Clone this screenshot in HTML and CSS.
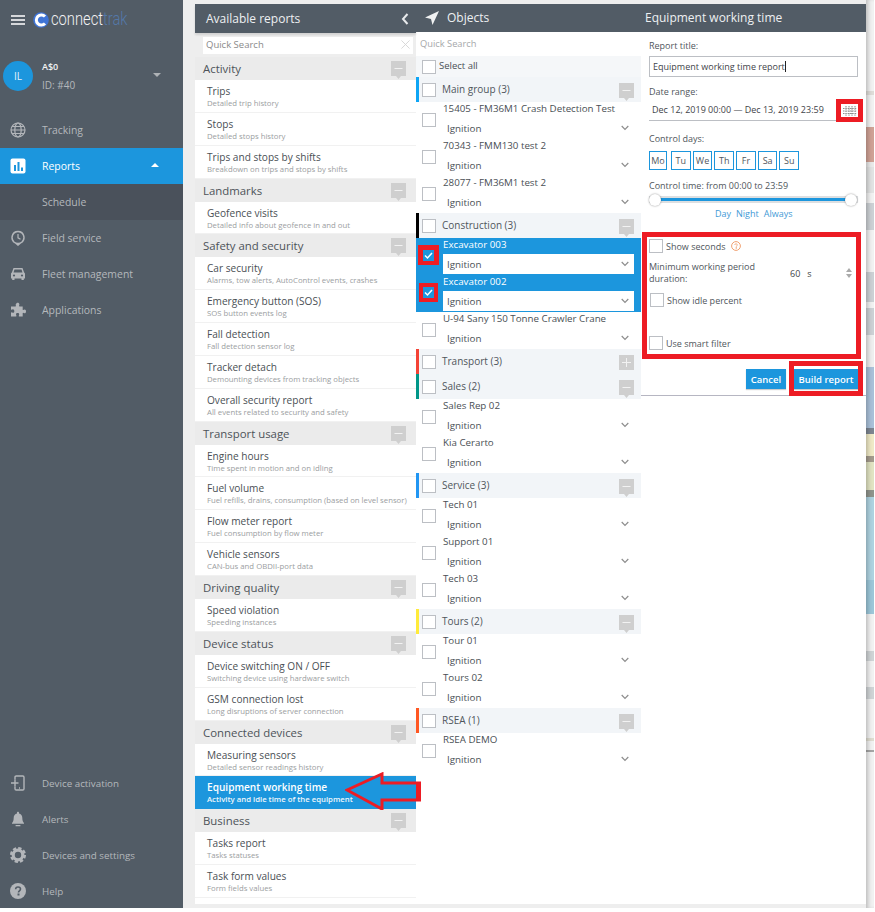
FILE: index.html
```html
<!DOCTYPE html>
<html lang="en">
<head>
<meta charset="utf-8">
<title>Equipment working time</title>
<link rel="stylesheet" href="styles.css">
</head>
<body>
<svg class="defs" width="0" height="0" aria-hidden="true">
  <symbol id="minus" viewBox="0 0 15 18">
    <path d="M0 0h15v15h-5l-2.500 3-2.500-3H0z" fill="#cfcfcf"/>
    <rect x="3.500" y="7" width="8" height="1" fill="#f2f2f2"/>
  </symbol>
  <symbol id="plus" viewBox="0 0 15 15">
    <rect width="15" height="15" fill="#cfcfcf"/>
    <path d="M7 3h1v4h4v1H8v4H7V8H3V7h4z" fill="#f2f2f2"/>
  </symbol>
  <symbol id="chev" viewBox="0 0 8 6">
    <path d="M.7 1l3.300 3.300L7.300 1" fill="none" stroke="#8d8d8d" stroke-width="1.200"/>
  </symbol>
</svg>
<div class="app">
  <aside class="sidebar">
    <div class="brand">
      <span class="burger"><i></i><i></i><i></i></span>
      <svg class="logo-mark" viewBox="0 0 16 16" width="16" height="16"><circle cx="8" cy="8" r="7.800" fill="#3f74d6"/><path d="M12 4.600A5 5 0 1 0 12 11.400" fill="none" stroke="#fff" stroke-width="3"/></svg>
      <span class="logo-text">connect<em>trak</em></span>
    </div>
    <div class="account">
      <span class="avatar">IL</span>
      <span class="acc-info"><b>A$0</b><small>ID: #40</small></span>
      <span class="caret-down"></span>
    </div>
    <nav class="nav">
      <a class="nav-item"><svg class="ico" viewBox="0 0 16 16"><g fill="none" stroke="#b3b6ba" stroke-width="1.200"><circle cx="8" cy="8" r="7"/><ellipse cx="8" cy="8" rx="3.200" ry="7"/><path d="M1 8h14M2 4.500h12M2 11.500h12"/></g></svg><span>Tracking</span></a>
      <a class="nav-item active"><svg class="ico" viewBox="0 0 16 16"><rect width="15" height="15" x=".5" y=".5" rx="2" fill="#fff"/><path d="M4 7h2v6H4zM7.500 4h2v9h-2zM11 9.500h2V13h-2z" fill="#1c96dd"/></svg><span>Reports</span><i class="caret-up"></i></a>
      <a class="nav-item sub"><span>Schedule</span></a>
      <a class="nav-item"><svg class="ico" viewBox="0 0 16 16"><path d="M8 .8a6.700 6.700 0 0 1 3 12.700L8 16l-3-2.500A6.700 6.700 0 0 1 8 .8z" fill="#b3b6ba"/><circle cx="8" cy="7.500" r="5.200" fill="#525c66"/><path d="M8 4v3.800l2.500 1.400" fill="none" stroke="#b3b6ba" stroke-width="1.200"/></svg><span>Field service</span></a>
      <a class="nav-item"><svg class="ico" viewBox="0 0 16 16"><path d="M3.500 2h9l1.600 4.500c.6.300.9.800.9 1.500v4.500h-1.200V14h-2.300v-1.500H4.500V14H2.200v-1.500H1V8c0-.7.3-1.200.9-1.500z" fill="#b3b6ba"/><path d="M4.500 3.500h7l1 3h-9z" fill="#525c66"/><circle cx="4" cy="9.500" r="1.100" fill="#525c66"/><circle cx="12" cy="9.500" r="1.100" fill="#525c66"/></svg><span>Fleet management</span></a>
      <a class="nav-item"><svg class="ico" viewBox="0 0 16 16"><path d="M6 2.400C6 1.400 6.800.8 7.700.8s1.700.6 1.700 1.600c0 .7-.4 1-.4 1.500 0 .3.300.5.700.5h3v3.100c0 .4.200.6.500.6.500 0 .8-.5 1.400-.5.900 0 1.400.8 1.400 1.800s-.5 1.800-1.400 1.800c-.6 0-.9-.5-1.400-.5-.3 0-.5.200-.5.600v3.100H9.300c-.4 0-.6-.2-.6-.5 0-.5.500-.8.500-1.400 0-.9-.7-1.400-1.600-1.400s-1.600.5-1.600 1.400c0 .6.500.9.500 1.400 0 .3-.2.500-.6.500H1v-3.500c0-.4.200-.6.500-.6.500 0 .8.500 1.400.5.900 0 1.400-.7 1.400-1.600S3.800 7.300 2.900 7.300c-.6 0-.9.500-1.400.5-.3 0-.5-.2-.5-.6V4.400h4.300c.4 0 .7-.2.700-.5 0-.5-.5-.8-.5-1.500z" fill="#b3b6ba"/></svg><span>Applications</span></a>
    </nav>
    <nav class="nav nav-bottom">
      <a class="nav-item"><svg class="ico" viewBox="0 0 16 16"><g fill="none" stroke="#b3b6ba" stroke-width="1.400"><path d="M5 4.500V2.200C5 1.500 5.500 1 6.200 1h6.600c.7 0 1.200.5 1.200 1.200v11.600c0 .7-.5 1.200-1.200 1.200H6.200C5.500 15 5 14.500 5 13.800v-2.300"/><path d="M1 8h7.500M5 4.500V11.500M9 13h1" /></g></svg><span>Device activation</span></a>
      <a class="nav-item"><svg class="ico" viewBox="0 0 16 16"><path d="M8 .8c.6 0 1 .4 1 1v.6c2 .5 3.300 2.100 3.300 4.300 0 3.200.9 4.300 1.700 5.300v.7H2v-.7c.8-1 1.700-2.100 1.700-5.300 0-2.200 1.300-3.800 3.300-4.300v-.6c0-.6.400-1 1-1z" fill="#b3b6ba"/><rect x="5.500" y="14" width="5" height="1.300" rx=".6" fill="#b3b6ba"/></svg><span>Alerts</span></a>
      <a class="nav-item"><svg class="ico" viewBox="0 0 16 16"><circle cx="8" cy="8" r="4.800" fill="none" stroke="#b3b6ba" stroke-width="3.200"/><circle cx="8" cy="8" r="6.800" fill="none" stroke="#b3b6ba" stroke-width="2.400" stroke-dasharray="3.300 2.040"/></svg><span>Devices and settings</span></a>
      <a class="nav-item"><svg class="ico" viewBox="0 0 16 16"><circle cx="8" cy="8" r="8" fill="#b3b6ba"/><path d="M5.600 6.200C5.700 4.700 6.700 4 8 4c1.400 0 2.500.8 2.500 2.100 0 1.800-2 1.800-2 3.300" fill="none" stroke="#525c66" stroke-width="1.600"/><rect x="7.500" y="10.500" width="2" height="2" fill="#525c66"/></svg><span>Help</span></a>
    </nav>
  </aside>

  <main class="main">
    <div class="panels">
      <section class="reports">
        <header class="head head-reports"><h2>Available reports</h2><svg class="back" viewBox="0 0 8 12" width="8" height="12"><path d="M6.500 1L2 6l4.500 5" fill="none" stroke="#e8eaec" stroke-width="2"/></svg></header>
        <div class="rsearch"><div class="rsearch-box"><span>Quick Search</span><svg viewBox="0 0 10 10" width="9" height="9"><path d="M.5.500l9 9M9.500.5l-9 9" stroke="#d5d5d5" stroke-width="1"/></svg></div></div>

        <div class="rgroup"><span>Activity</span><svg class="gico"><use href="#minus"/></svg></div>
        <a class="ritem"><b>Trips</b><small>Detailed trip history</small></a>
        <a class="ritem"><b>Stops</b><small>Detailed stops history</small></a>
        <a class="ritem"><b>Trips and stops by shifts</b><small>Breakdown on trips and stops by shifts</small></a>
        <div class="rgroup"><span>Landmarks</span><svg class="gico"><use href="#minus"/></svg></div>
        <a class="ritem"><b>Geofence visits</b><small>Detailed info about geofence in and out</small></a>
        <div class="rgroup"><span>Safety and security</span><svg class="gico"><use href="#minus"/></svg></div>
        <a class="ritem"><b>Car security</b><small>Alarms, tow alerts, AutoControl events, crashes</small></a>
        <a class="ritem"><b>Emergency button (SOS)</b><small>SOS button events log</small></a>
        <a class="ritem"><b>Fall detection</b><small>Fall detection sensor log</small></a>
        <a class="ritem"><b>Tracker detach</b><small>Demounting devices from tracking objects</small></a>
        <a class="ritem"><b>Overall security report</b><small>All events related to security and safety</small></a>
        <div class="rgroup"><span>Transport usage</span><svg class="gico"><use href="#minus"/></svg></div>
        <a class="ritem"><b>Engine hours</b><small>Time spent in motion and on idling</small></a>
        <a class="ritem"><b>Fuel volume</b><small>Fuel refills, drains, consumption (based on level sensor)</small></a>
        <a class="ritem"><b>Flow meter report</b><small>Fuel consumption by flow meter</small></a>
        <a class="ritem"><b>Vehicle sensors</b><small>CAN-bus and OBDII-port data</small></a>
        <div class="rgroup"><span>Driving quality</span><svg class="gico"><use href="#minus"/></svg></div>
        <a class="ritem"><b>Speed violation</b><small>Speeding instances</small></a>
        <div class="rgroup"><span>Device status</span><svg class="gico"><use href="#minus"/></svg></div>
        <a class="ritem"><b>Device switching ON / OFF</b><small>Switching device using hardware switch</small></a>
        <a class="ritem"><b>GSM connection lost</b><small>Long disruptions of server connection</small></a>
        <div class="rgroup"><span>Connected devices</span><svg class="gico"><use href="#minus"/></svg></div>
        <a class="ritem"><b>Measuring sensors</b><small>Detailed sensor readings history</small></a>
        <a class="ritem selected"><b>Equipment working time</b><small>Activity and idle time of the equipment</small></a>
        <div class="rgroup"><span>Business</span><svg class="gico"><use href="#minus"/></svg></div>
        <a class="ritem"><b>Tasks report</b><small>Tasks statuses</small></a>
        <a class="ritem"><b>Task form values</b><small>Form fields values</small></a>
      </section>

      <section class="objects">
        <header class="head head-objects"><svg viewBox="0 0 14 14" width="14" height="14"><path d="M14 0L0 6.500l6 1.500L7.500 14z" fill="#f0f1f2"/></svg><h2>Objects</h2></header>
        <div class="osearch">Quick Search</div>
        <div class="selectall"><i class="cb"></i><span>Select all</span></div>

        <div class="ogroup g-blue"><i class="cb"></i><span>Main group (3)</span><svg class="gico"><use href="#minus"/></svg></div>
        <div class="orow"><i class="cb"></i><div class="orow-body"><p>15405 - FM36M1 Crash Detection Test</p><div class="sel"><span>Ignition</span><svg class="chev"><use href="#chev"/></svg></div></div></div>
        <div class="orow"><i class="cb"></i><div class="orow-body"><p>70343 - FMM130 test 2</p><div class="sel"><span>Ignition</span><svg class="chev"><use href="#chev"/></svg></div></div></div>
        <div class="orow"><i class="cb"></i><div class="orow-body"><p>28077 - FM36M1 test 2</p><div class="sel"><span>Ignition</span><svg class="chev"><use href="#chev"/></svg></div></div></div>

        <div class="ogroup g-black"><i class="cb"></i><span>Construction (3)</span><svg class="gico"><use href="#minus"/></svg></div>
        <div class="orow on"><i class="cb"><svg viewBox="0 0 11 11" width="11" height="11"><path d="M2 5.500l2.500 2.500L9 3" fill="none" stroke="#fff" stroke-width="1.500"/></svg></i><div class="orow-body"><p>Excavator 003</p><div class="sel"><span>Ignition</span><svg class="chev"><use href="#chev"/></svg></div></div></div>
        <div class="orow on"><i class="cb"><svg viewBox="0 0 11 11" width="11" height="11"><path d="M2 5.500l2.500 2.500L9 3" fill="none" stroke="#fff" stroke-width="1.500"/></svg></i><div class="orow-body"><p>Excavator 002</p><div class="sel"><span>Ignition</span><svg class="chev"><use href="#chev"/></svg></div></div></div>
        <div class="orow"><i class="cb"></i><div class="orow-body"><p>U-94 Sany 150 Tonne Crawler Crane</p><div class="sel"><span>Ignition</span><svg class="chev"><use href="#chev"/></svg></div></div></div>

        <div class="ogroup g-red"><i class="cb"></i><span>Transport (3)</span><svg class="gico gico-plus"><use href="#plus"/></svg></div>
        <div class="ogroup g-teal"><i class="cb"></i><span>Sales (2)</span><svg class="gico"><use href="#minus"/></svg></div>
        <div class="orow"><i class="cb"></i><div class="orow-body"><p>Sales Rep 02</p><div class="sel"><span>Ignition</span><svg class="chev"><use href="#chev"/></svg></div></div></div>
        <div class="orow"><i class="cb"></i><div class="orow-body"><p>Kia Cerarto</p><div class="sel"><span>Ignition</span><svg class="chev"><use href="#chev"/></svg></div></div></div>

        <div class="ogroup g-blue2"><i class="cb"></i><span>Service (3)</span><svg class="gico"><use href="#minus"/></svg></div>
        <div class="orow"><i class="cb"></i><div class="orow-body"><p>Tech 01</p><div class="sel"><span>Ignition</span><svg class="chev"><use href="#chev"/></svg></div></div></div>
        <div class="orow"><i class="cb"></i><div class="orow-body"><p>Support 01</p><div class="sel"><span>Ignition</span><svg class="chev"><use href="#chev"/></svg></div></div></div>
        <div class="orow"><i class="cb"></i><div class="orow-body"><p>Tech 03</p><div class="sel"><span>Ignition</span><svg class="chev"><use href="#chev"/></svg></div></div></div>

        <div class="ogroup g-yellow"><i class="cb"></i><span>Tours (2)</span><svg class="gico"><use href="#minus"/></svg></div>
        <div class="orow"><i class="cb"></i><div class="orow-body"><p>Tour 01</p><div class="sel"><span>Ignition</span><svg class="chev"><use href="#chev"/></svg></div></div></div>
        <div class="orow"><i class="cb"></i><div class="orow-body"><p>Tours 02</p><div class="sel"><span>Ignition</span><svg class="chev"><use href="#chev"/></svg></div></div></div>

        <div class="ogroup g-orange"><i class="cb"></i><span>RSEA (1)</span><svg class="gico"><use href="#minus"/></svg></div>
        <div class="orow"><i class="cb"></i><div class="orow-body"><p>RSEA DEMO</p><div class="sel"><span>Ignition</span><svg class="chev"><use href="#chev"/></svg></div></div></div>
      </section>

      <section class="form">
        <header class="head head-form"><h2>Equipment working time</h2></header>
        <div class="form-body">
          <label class="lbl lbl-first">Report title:</label>
          <div class="title-input"><span>Equipment working time report</span><i class="cursor"></i></div>
          <label class="lbl lbl-date">Date range:</label>
          <div class="date-row"><span>Dec 12, 2019 00:00 — Dec 13, 2019 23:59</span></div>
          <label class="lbl lbl-days">Control days:</label>
          <div class="days"><span class="d d-mo">Mo</span><span class="d">Tu</span><span class="d">We</span><span class="d">Th</span><span class="d">Fr</span><span class="d">Sa</span><span class="d">Su</span></div>
          <label class="lbl lbl-time">Control time: from 00:00 to 23:59</label>
          <div class="slider"><div class="track"><div class="fill"></div></div><i class="knob"></i><i class="knob knob-r"></i></div>
          <div class="links"><a>Day</a><a>Night</a><a>Always</a></div>
          <div class="check-row row-seconds"><i class="cb"></i><span>Show seconds</span><svg class="qm" viewBox="0 0 10 10" width="10" height="10"><circle cx="5" cy="5" r="4.400" fill="none" stroke="#f0a070" stroke-width="1"/><path d="M3.600 4C3.700 3.200 4.300 2.800 5 2.800c.8 0 1.400.5 1.400 1.100 0 .9-1.200 1-1.200 1.900M4.900 6.600h.6v.7h-.6z" fill="none" stroke="#f0a070" stroke-width=".8"/></svg></div>
          <div class="min-row"><span class="min-lbl">Minimum working period duration:</span><span class="min-val">60</span><span class="min-unit">s</span><span class="spin"><i class="sp-up"></i><i class="sp-down"></i></span></div>
          <div class="check-row row-idle"><i class="cb"></i><span>Show idle percent</span></div>
          <div class="check-row row-smart"><i class="cb"></i><span>Use smart filter</span></div>
          <div class="actions"><button class="btn">Cancel</button><button class="btn btn-build">Build report</button></div>
        </div>
      </section>
    </div>
    <div class="map"></div>
  </main>

  <!-- red annotations laid over the page -->
  <div class="mark mark-cal"><svg viewBox="0 0 14 10" width="14" height="10"><path d="M0 2.500h14M0 5h14M0 7.500h14M3 0v10M6 0v10M9 0v10M12 0v10" stroke="#8e8e8e" stroke-width="1.100" stroke-dasharray="1.500 .8"/></svg></div>
  <div class="mark mark-opts"></div>
  <div class="mark mark-build"></div>
  <div class="mark mark-cb1"></div>
  <div class="mark mark-cb2"></div>
  <svg class="arrow" viewBox="0 0 76 38" width="76" height="38"><path d="M2 18L37 2v9h38v17H37v9z" fill="none" stroke="#ed1c24" stroke-width="3"/><path d="M71 10h4v19h-4z" fill="#ed1c24"/></svg>
</div>
</body>
</html>
```

FILE: styles.css
```css
* { box-sizing: border-box; }
html, body { margin: 0; padding: 0; background: #fff; }
body { font-family: "Open Sans", "Liberation Sans", sans-serif; color: #4a4f55; }
.defs { position: absolute; }
h2, p { margin: 0; font-weight: 400; }
a { display: block; }

.app { position: relative; display: flex; width: 874px; height: 908px; overflow: hidden; }

/* sidebar */
.sidebar { width: 183px; flex: none; background: #525c66; display: flex; flex-direction: column; color: #b4b8bc; }
.brand { height: 32px; padding: 10px 0 0 11px; display: flex; align-items: flex-start; }
.burger { width: 14px; margin-top: 5px; display: flex; flex-direction: column; gap: 2px; }
.burger i { display: block; height: 2px; background: #d5d7da; }
.logo-mark { margin: 2px 0 0 8px; flex: none; }
.logo-text { margin: -3px 0 0 2px; font-family: Roboto, sans-serif; font-weight: 300; font-size: 19px; line-height: 24px; color: #f2f3f5; transform: scaleX(.775); transform-origin: left center; white-space: nowrap; }
.logo-text em { font-style: normal; color: #5478a8; }
.account { height: 80px; padding: 29px 0 0 3px; display: flex; align-items: flex-start; }
.avatar { width: 30px; height: 30px; border-radius: 50%; background: #1c96dd; color: #e8f4fb; font-size: 10px; line-height: 30px; text-align: center; flex: none; }
.acc-info { margin-left: 9px; display: flex; flex-direction: column; }
.acc-info b { font-size: 9px; line-height: 12px; font-weight: 600; color: #f2f3f4; }
.acc-info small { font-size: 10px; line-height: 12px; margin-top: 6px; color: #b4b8bc; }
.caret-down { margin: 12px 0 0 auto; margin-right: 22px; width: 0; height: 0; border: 4.500px solid transparent; border-top: 4.500px solid #aeb2b6; border-bottom: 0; }
.nav-item { height: 36px; display: flex; align-items: center; padding-left: 10px; font-size: 10.450px; color: #b4b8bc; position: relative; }
.nav-item .ico { width: 16px; height: 16px; flex: none; margin-right: 16px; }
.nav-item.active { background: #1c96dd; color: #fff; }
.nav-item.sub { background: #4a515b; padding-left: 42px; }
.caret-up { position: absolute; left: 151px; top: 15px; width: 0; height: 0; border: 4.500px solid transparent; border-bottom: 4.500px solid #fff; border-top: 0; }
.nav-bottom { margin-top: auto; margin-bottom: -1px; }
.nav-bottom .nav-item { font-size: 9.800px; }

/* main */
.main { flex: 1; display: flex; background: #eee; padding-left: 12px; }
.panels { width: 671px; margin: 4px 0; display: flex; height: 900px; background: #fff; }
.map { flex: 1; box-shadow: inset 4px 0 4px -2px rgba(0,0,0,.22);
  background: linear-gradient(to bottom,
    #f1f1f1 0 91px, #dedcd8 91px 95px, #f1f1f1 95px 127px, #cfa195 127px 162px, #e9e9e9 162px 167px,
    #e1e2e2 167px 193px, #f1f1f1 193px 203px, #ccd0d4 203px 230px, #f1f1f1 230px 272px,
    #ccd0d4 272px 302px, #f1f1f1 302px 308px, #ccd0d4 308px 335px, #eee 335px 367px,
    #a9c0d8 367px 428px, #7d8590 428px 434px, #efe9c6 434px 456px, #a39a8c 456px 462px,
    #e1e3c2 462px 490px, #8f948c 490px 497px, #aed2e0 497px 580px, #9cc6d8 580px 614px,
    #f1f1f1 614px 651px, #cfd3d5 651px 661px, #f1f1f1 661px 687px, #cfd3d5 687px 699px,
    #f1f1f1 699px 738px, #dedcd0 738px 741px, #f1f1f1 741px 750px, #a5a5a5 750px 752px, #f1f1f1 752px 908px);
}

.head { background: #525c66; color: #eef0f2; display: flex; align-items: center; height: 28px; position: relative; z-index: 1; }
.head h2 { font-size: 12px; line-height: 16px; }
.head-reports { height: 29px; padding-left: 11px; box-shadow: 0 2px 2px rgba(0,0,0,.12); }
.back { margin-left: auto; margin-right: 7px; }
.head-objects { padding-left: 9px; }
.head-objects h2 { margin-left: 8px; }
.head-form { padding-left: 4px; }

/* reports */
.reports { width: 221px; flex: none; background: #fff; }
.rsearch { height: 24px; background: #eee; padding: 4px 3px 0 8px; }
.rsearch-box { height: 17px; background: #fff; display: flex; align-items: center; justify-content: space-between; padding: 0 3px 2px; font-size: 9.500px; color: #8a8a8a; }
.rgroup { height: 23px; background: #ebebeb; display: flex; align-items: center; justify-content: space-between; padding: 0 10px 0 8px; font-size: 11.400px; color: #4d5359; }
.gico { width: 15px; height: 18px; flex: none; }
.rgroup .gico { margin-top: 3px; }
.ritem { height: 32.850px; padding: 4px 12px 0; border-bottom: 1px solid #f1f1f1; overflow: hidden; white-space: nowrap; }
.ritem b { display: block; font-weight: 400; font-size: 10.100px; line-height: 14px; color: #4a4f55; }
.ritem small { display: block; font-size: 7.750px; line-height: 11px; color: #9b9ea1; margin-top: 0; }
.ritem.selected { background: #1c96dd; border-bottom: 0; }
.ritem.selected b { color: #fff; font-weight: 600; }
.ritem.selected small { color: #eef6fc; font-weight: 600; }

/* objects */
.objects { width: 225px; flex: none; background: #fff; }
.osearch { height: 24px; padding-left: 4px; font-size: 9.300px; line-height: 24px; color: #a6a8aa; }
.selectall { height: 21px; background: #f5f7f9; display: flex; align-items: center; padding: 0 0 0 6px; font-size: 9.500px; color: #4a4f55; }
.selectall span { margin-top: -2px; }
.cb { display: block; flex: none; width: 14px; height: 14px; border: 1px solid #bcbfc4; background: #fff; }
.selectall .cb { margin-right: 3px; }
.ogroup { height: 25px; background: #f2f5f8; display: flex; align-items: center; padding: 0 7px 0 3px; border-left: 3px solid transparent; font-size: 10px; color: #50565c; }
.ogroup span { margin: -2px 0 0 6px; flex: 1; }
.ogroup .gico { margin-top: 5px; }
.ogroup .gico-plus { height: 15px; margin-top: 2px; }
.g-blue { border-left-color: #0ea5f5; }
.g-black { border-left-color: #000; }
.g-red { border-left-color: #f44336; }
.g-teal { border-left-color: #009688; }
.g-blue2 { border-left-color: #2196f3; }
.g-yellow { border-left-color: #ffeb3b; }
.g-orange { border-left-color: #ff5722; }
.orow { height: 37px; display: flex; padding-left: 6px; position: relative; }
.orow > .cb { margin-top: 11px; }
.orow-body { margin-left: 7px; width: 191px; }
.orow-body p { font-size: 9.750px; line-height: 13px; margin-top: 0; color: #4a4f55; white-space: nowrap; }
.sel { margin-top: 3px; height: 20px; display: flex; align-items: center; justify-content: space-between; padding: 0 5px 0 4px; font-size: 9.800px; color: #4a4f55; background: #fff; }
.chev { width: 8px; height: 6px; }
.orow.on { background: #1c96dd; }
.orow.on p { color: #fff; }
.orow.on > .cb { background: #1c96dd; border: 0; width: 11px; height: 11px; margin: 12px 3px 0 1px; position: relative; z-index: 3; }
.orow.on > .cb svg { display: block; }
.orow.on .orow-body { margin-left: 6px; }

/* form */
.form { width: 225px; flex: none; background: #fff; }
.form-body { padding: 0 8px 0 8px; height: 364px; border-bottom: 1px solid #b6b6c2; font-size: 9px; color: #50565c; }
.lbl { display: block; font-size: 9px; line-height: 14px; color: #50565c; }
.lbl-first { padding-top: 7px; height: 20px; }
.title-input { margin-top: 4px; width: 209px; height: 21px; border: 1px solid #bcbfc4; display: flex; align-items: center; padding-left: 3px; font-size: 9px; color: #3f4449; }
.cursor { width: 1px; height: 11px; background: #222; }
.lbl-date { margin-top: 8px; }
.date-row { width: 187px; height: 22px; border-bottom: 1px solid #bcbfc4; margin-top: 0; padding-left: 3px; line-height: 21px; font-size: 9px; color: #3f4449; white-space: nowrap; }
.lbl-days { margin-top: 11px; }
.days { margin-top: 5px; display: flex; gap: 2px; }
.d { width: 19.700px; height: 19px; border: 1px solid #1c96dd; font-size: 9px; line-height: 17px; text-align: center; color: #50565c; }
.d-mo { width: 18px; margin-right: 2px; }
.lbl-time { margin-top: 9px; }
.slider { position: relative; margin-top: 0; height: 14px; width: 209px; padding-top: 3px; }
.track { height: 7px; background: #dddfe1; padding-top: 2px; }
.fill { height: 3px; background: #1c96dd; margin: 0 6px; }
.knob { position: absolute; left: 0; top: 1px; width: 12px; height: 12px; border-radius: 50%; background: #fff; box-shadow: 0 0 2px rgba(0,0,0,.45); }
.knob-r { left: auto; right: 1px; }
.links { margin-top: 0; height: 14px; display: flex; gap: 5px; padding-left: 66px; font-size: 9px; line-height: 14px; color: #3f9ad6; }
.check-row { display: flex; align-items: center; font-size: 9px; color: #50565c; height: 14px; }
.check-row .cb { margin-right: 3px; }
.row-seconds { margin-top: 18px; }
.qm { margin-left: 5px; }
.min-row { display: flex; align-items: center; margin-top: 8px; height: 24px; position: relative; }
.min-lbl { width: 130px; font-size: 9px; line-height: 12px; color: #50565c; }
.min-val { margin-left: 11px; font-size: 9px; color: #3f4449; }
.min-unit { margin-left: 7px; font-size: 9px; color: #3f4449; }
.spin { margin-left: auto; margin-right: 6px; display: flex; flex-direction: column; gap: 2px; }
.spin i { display: block; width: 0; height: 0; border: 3px solid transparent; }
.sp-up { border-bottom: 4px solid #aaa !important; border-top: 0 !important; }
.sp-down { border-top: 4px solid #aaa !important; border-bottom: 0 !important; }
.row-idle { margin-top: 8px; padding-left: 1px; }
.row-smart { margin-top: 29px; }
.actions { margin-top: 19px; display: flex; justify-content: flex-end; gap: 8px; }
.btn { width: 40px; height: 20px; padding: 0; border: 0; background: #1c96dd; color: #fff; font-family: inherit; font-size: 9.500px; font-weight: 600; box-shadow: 0 1px 1px rgba(0,0,0,.2); }
.btn-build { width: 64px; }

/* red annotations */
.mark { position: absolute; border: 5px solid #ed1c24; }
.mark-cal { left: 836px; top: 99px; width: 27px; height: 23px; border-width: 5px; background: #fff; display: flex; align-items: center; justify-content: center; }
.mark-opts { left: 642px; top: 232px; width: 219px; height: 127px; }
.mark-build { left: 789px; top: 361px; width: 74px; height: 35px; }
.mark-cb1 { left: 418px; top: 245px; width: 21px; height: 20px; }
.mark-cb2 { left: 419px; top: 283px; width: 19px; height: 19px; border-width: 4px; }
.arrow { position: absolute; left: 345px; top: 772px; }
```
